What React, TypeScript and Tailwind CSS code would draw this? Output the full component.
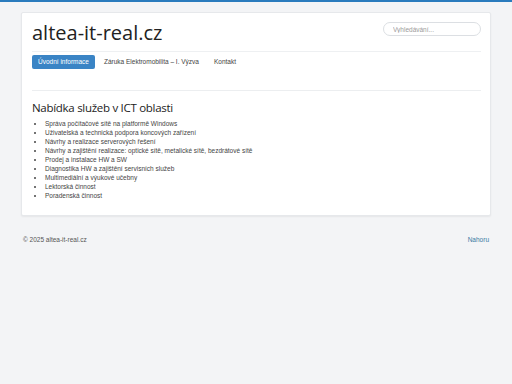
const services = [
  "Správa počítačové sítě na platformě Windows",
  "Uživatelská a technická podpora koncových zařízení",
  "Návrhy a realizace serverových řešení",
  "Návrhy a zajištění realizace: optické sítě, metalické sítě, bezdrátové sítě",
  "Prodej a instalace HW a SW",
  "Diagnostika HW a zajištění servisních služeb",
  "Multimediální a výukové učebny",
  "Lektorská činnost",
  "Poradenská činnost",
];

const nav = ["Úvodní informace", "Záruka Elektromobilita – I. Výzva", "Kontakt"];

export default function App() {
  return (
    <div className="min-h-screen bg-[#f3f4f6] font-['Liberation_Sans',Arial,sans-serif] text-[#444]">
      <div className="h-[2px] bg-[#2a7bbd]" />
      <div className="px-[21px] pt-[10px]">
        <div className="bg-white border border-[#e6e8eb] rounded-[2px] shadow-[0_1px_2px_rgba(0,0,0,0.06)] pl-[10px] pr-[9px] pt-[5px] pb-[15px]">
          <header className="flex items-start justify-between">
            <h1 className="font-['Open_Sans',sans-serif] text-[20px] leading-[30px] text-[#222]">altea-it-real.cz</h1>
            <input
              placeholder="Vyhledávání..."
              className="mt-[4px] w-[98px] h-[14px] rounded-full border border-[#dcdfe3] px-[9px] text-[6.5px] text-[#555] placeholder:text-[#9a9a9a] outline-none"
            />
          </header>
          <div className="mt-[3px] border-t border-[#eef0f2]" />
          <nav className="mt-[3px] flex items-center gap-[3px]">
            {nav.map((n, i) => (
              <a
                key={n}
                href="#"
                className={
                  i === 0
                    ? "h-[14px] px-[6px] flex items-center rounded-[2px] bg-[#3a84c5] text-white text-[6.5px]"
                    : "h-[14px] px-[6px] flex items-center text-[#444] text-[6.5px]"
                }
              >
                {n}
              </a>
            ))}
          </nav>
          <div className="mt-[21px] border-t border-[#eceef0]" />
          <h2 className="mt-[8px] font-['Open_Sans',sans-serif] text-[11.5px] leading-[18px] tracking-[-0.025em] text-[#222]">
            Nabídka služeb v ICT oblasti
          </h2>
          <ul className="mt-[2px] list-disc pl-[13px] text-[6.5px] leading-[9px] text-[#444]">
            {services.map((s) => (
              <li key={s}>{s}</li>
            ))}
          </ul>
        </div>
        <footer className="mt-[19px] flex justify-between px-[2px] text-[6.5px] leading-[9px]">
          <span className="text-[#555]">© 2025 altea-it-real.cz</span>
          <a href="#" className="text-[#3a7aa3]">Nahoru</a>
        </footer>
      </div>
    </div>
  );
}
